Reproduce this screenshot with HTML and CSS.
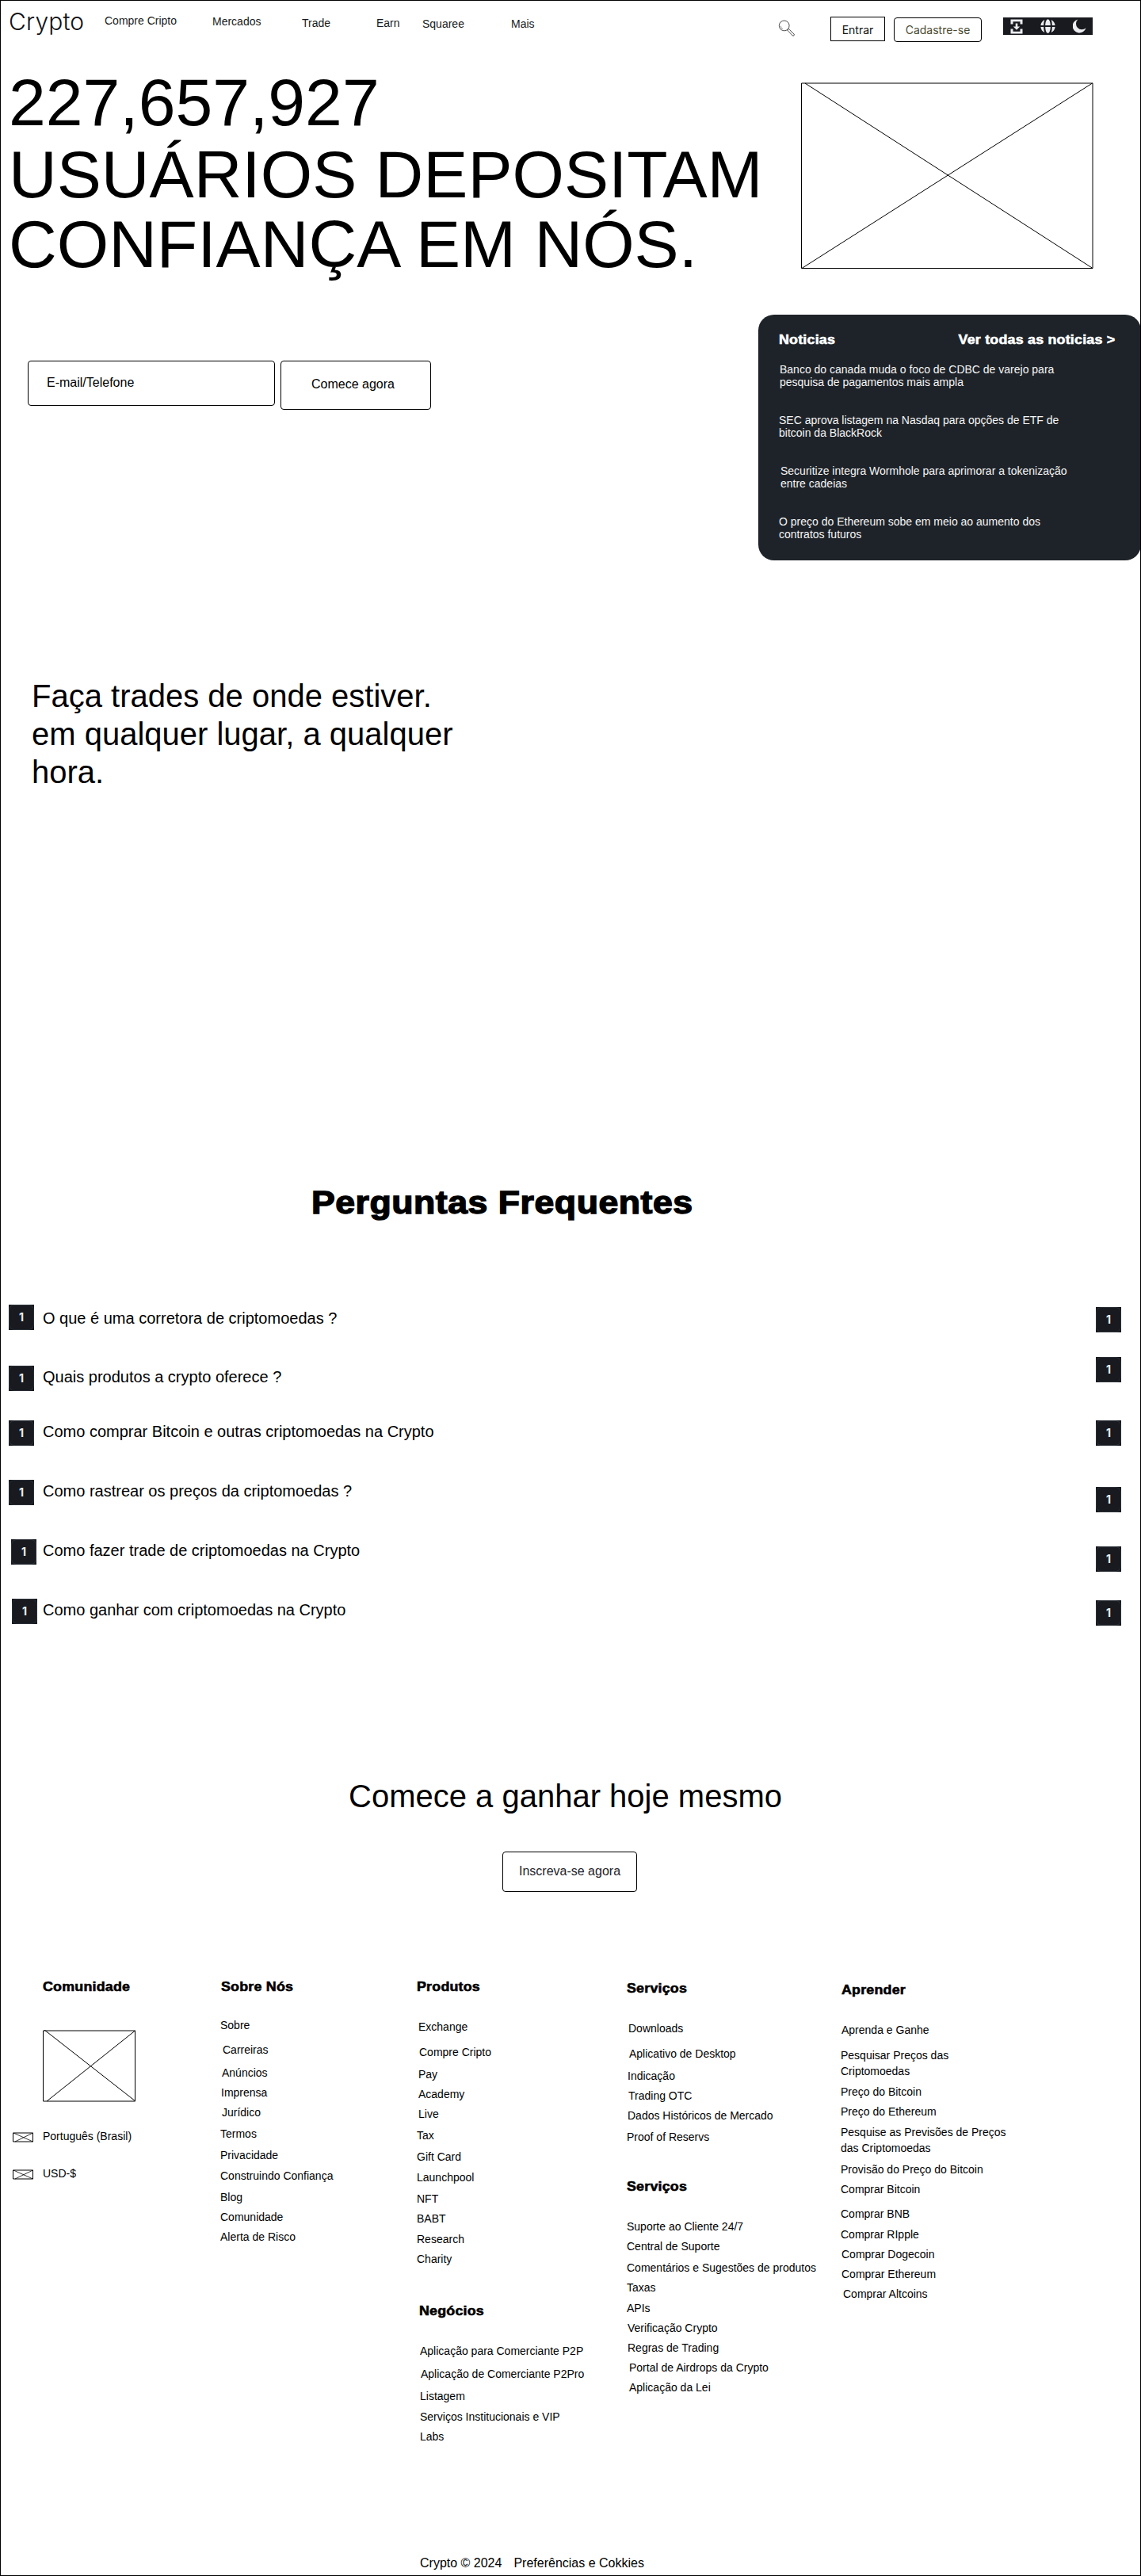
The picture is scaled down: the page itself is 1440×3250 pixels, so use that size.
FILE: index.html
```html
<!DOCTYPE html>
<html lang="pt-BR">
<head>
<meta charset="utf-8">
<title>Crypto</title>
<link rel="stylesheet" href="styles.css">
</head>
<body>
<div class="page">
  <header class="header">
    <div class="logo">Crypto</div>
    <nav class="nav">
      <a class="nav-buy">Compre Cripto</a>
      <a class="nav-markets">Mercados</a>
      <a class="nav-trade">Trade</a>
      <a class="nav-earn">Earn</a>
      <a class="nav-square">Squaree</a>
      <a class="nav-more">Mais</a>
    </nav>
    <svg class="search" width="22" height="22" viewBox="0 0 22 22" fill="none" stroke="#222" stroke-width="0.8">
      <circle cx="7.7" cy="7.4" r="6.4"/>
      <path d="M3.2 7.6a4.6 4.6 0 0 0 3 4.2" stroke-width=".5"/>
      <path d="M11.6 13l1.7-1.6 1.2 1.2 5.6 5.4c1 1.200-.7 2.900-1.900 1.900l-5.300-5.600z"/>
    </svg>
    <a class="btn btn-login">Entrar</a>
    <a class="btn btn-signup">Cadastre-se</a>
    <div class="tools">
      <svg width="16" height="19" viewBox="0 0 16 19" fill="#eaecef">
        <path d="M.5.500h15v6h-3V3.300h-9v3.200h-3zM.500 12.500h3v3.200h9v-3.200h3v6H.500zM6.700 5.500h2.600v4h2.900L8 13.700 3.800 9.500h2.900z"/>
      </svg>
      <svg width="19" height="18" viewBox="0 0 19 18" fill="#eaecef">
        <path d="M5.300.900A9 9 0 0 0 .4 8h3.800C4.200 5.200 4.600 2.800 5.300.9zM5.300 17.100A9 9 0 0 1 .4 10h3.800c0 2.800.4 5.200 1.100 7.100zM13.700.9A9 9 0 0 1 18.600 8h-3.800c0-2.800-.4-5.200-1.100-7.100zM13.700 17.100a9 9 0 0 0 4.900-7.100h-3.800c0 2.800-.4 5.200-1.100 7.100zM6.200 8C6.300 4 7.500.2 9.500.2S12.700 4 12.800 8zM6.200 10c.1 4 1.300 7.800 3.300 7.800s3.200-3.800 3.300-7.800z"/>
      </svg>
      <svg width="17" height="18" viewBox="0 0 17 18" fill="#eaecef">
        <path d="M6.300.5A8.600 8.600 0 1 0 16.500 11.300 7.300 7.300 0 0 1 6.300.5z"/>
      </svg>
    </div>
  </header>

  <section class="hero">
    <div class="hero-main">
      <h1><span>227,657,927</span><br>USUÁRIOS DEPOSITAM<br>CONFIANÇA EM NÓS.</h1>
      <div class="form">
        <div class="field">E-mail/Telefone</div>
        <a class="start">Comece agora</a>
      </div>
    </div>
    <div class="hero-side">
      <svg class="hero-image" width="369" height="236" fill="none" stroke="#000">
        <path d="M.5 1h367.500v233.500H.5zM5 1l363 233.500M367.500 1L1 234.500"/>
      </svg>
      <div class="news">
        <div class="news-head"><strong>Noticias</strong><strong class="news-all">Ver todas as noticias &gt;</strong></div>
        <p class="in-1">Banco do canada muda o foco de CDBC de varejo para<br>pesquisa de pagamentos mais ampla</p>
        <p>SEC aprova listagem na Nasdaq para opções de ETF de<br>bitcoin da BlackRock</p>
        <p class="in-2">Securitize integra Wormhole para aprimorar a tokenização<br>entre cadeias</p>
        <p>O preço do Ethereum sobe em meio ao aumento dos<br>contratos futuros</p>
      </div>
    </div>
  </section>

  <h2 class="trades">Faça trades de onde estiver.<br>em qualquer lugar, a qualquer<br>hora.</h2>

  <section class="faq">
    <h2 class="faq-title">Perguntas Frequentes</h2>
    <div class="faq-row"><b class="badge">1</b><span>O que é uma corretora de criptomoedas ?</span><b class="badge">1</b></div>
    <div class="faq-row"><b class="badge">1</b><span>Quais produtos a crypto oferece ?</span><b class="badge">1</b></div>
    <div class="faq-row"><b class="badge">1</b><span>Como comprar Bitcoin e outras criptomoedas na Crypto</span><b class="badge">1</b></div>
    <div class="faq-row"><b class="badge">1</b><span>Como rastrear os preços da criptomoedas ?</span><b class="badge">1</b></div>
    <div class="faq-row"><b class="badge">1</b><span>Como fazer trade de criptomoedas na Crypto</span><b class="badge">1</b></div>
    <div class="faq-row"><b class="badge">1</b><span>Como ganhar com criptomoedas na Crypto</span><b class="badge">1</b></div>
  </section>

  <section class="cta">
    <h2>Comece a ganhar hoje mesmo</h2>
    <a class="cta-btn">Inscreva-se agora</a>
  </section>

  <footer class="footer">
    <div class="col col-community">
      <h3>Comunidade</h3>
      <svg class="community-image" width="118" height="91" fill="none" stroke="#000">
        <path d="M.5 1h116v89H.5zM2 0l115 90M116.500 1L5 90"/>
      </svg>
      <div class="pref"><svg width="26" height="13" fill="none" stroke="#000"><path d="M.5 1h25v11H.5z"/><path d="M1 1l24.500 11M25.500 1L3 12" stroke-width=".8"/></svg><span>Português (Brasil)</span></div>
      <div class="pref"><svg width="26" height="13" fill="none" stroke="#000"><path d="M.5 1h25v11H.5z"/><path d="M1 1l24.500 11M25.500 1L3 12" stroke-width=".8"/></svg><span>USD-$</span></div>
    </div>
    <div class="col col-about">
      <h3>Sobre Nós</h3>
      <ul>
        <li class="mt-32">Sobre</li>
        <li class="mt-15 in-3">Carreiras</li>
        <li class="mt-13 in-2">Anúncios</li>
        <li class="in-1">Imprensa</li>
        <li class="in-2">Jurídico</li>
        <li class="mt-11">Termos</li>
        <li class="mt-11">Privacidade</li>
        <li class="mt-10">Construindo Confiança</li>
        <li class="mt-11">Blog</li>
        <li>Comunidade</li>
        <li>Alerta de Risco</li>
      </ul>
    </div>
    <div class="col col-products">
      <h3>Produtos</h3>
      <ul>
        <li class="mt-34 in-2">Exchange</li>
        <li class="mt-16 in-3">Compre Cripto</li>
        <li class="mt-12 in-2">Pay</li>
        <li class="in-2">Academy</li>
        <li class="in-2">Live</li>
        <li class="mt-11">Tax</li>
        <li class="mt-11">Gift Card</li>
        <li class="mt-10">Launchpool</li>
        <li class="mt-11">NFT</li>
        <li>BABT</li>
        <li class="mt-10">Research</li>
        <li>Charity</li>
      </ul>
      <h3 class="sub-business">Negócios</h3>
      <ul class="business">
        <li class="mt-34">Aplicação para Comerciante P2P</li>
        <li class="mt-13 in-1">Aplicação de Comerciante P2Pro</li>
        <li class="mt-12">Listagem</li>
        <li class="mt-10">Serviços Institucionais e VIP</li>
        <li>Labs</li>
      </ul>
    </div>
    <div class="col col-services">
      <h3>Serviços</h3>
      <ul>
        <li class="mt-34 in-2">Downloads</li>
        <li class="mt-16 in-3">Aplicativo de Desktop</li>
        <li class="mt-12 in-1">Indicação</li>
        <li class="in-2">Trading OTC</li>
        <li class="in-1">Dados Históricos de Mercado</li>
        <li class="mt-11">Proof of Reservs</li>
      </ul>
      <h3 class="sub-services">Serviços</h3>
      <ul>
        <li class="mt-34">Suporte ao Cliente 24/7</li>
        <li>Central de Suporte</li>
        <li class="mt-11">Comentários e Sugestões de produtos</li>
        <li>Taxas</li>
        <li class="mt-10">APIs</li>
        <li class="in-1">Verificação Crypto</li>
        <li class="in-1">Regras de Trading</li>
        <li class="in-3">Portal de Airdrops da Crypto</li>
        <li class="in-3">Aplicação da Lei</li>
      </ul>
    </div>
    <div class="col col-learn">
      <h3>Aprender</h3>
      <ul>
        <li class="mt-34 in-1">Aprenda e Ganhe</li>
        <li class="mt-14 tall">Pesquisar Preços das<br>Criptomoedas</li>
        <li class="mt-8">Preço do Bitcoin</li>
        <li>Preço do Ethereum</li>
        <li class="mt-8 tall">Pesquise as Previsões de Preços<br>das Criptomoedas</li>
        <li>Provisão do Preço do Bitcoin</li>
        <li>Comprar Bitcoin</li>
        <li class="mt-15">Comprar BNB</li>
        <li class="mt-10">Comprar RIpple</li>
        <li class="in-1">Comprar Dogecoin</li>
        <li class="in-1">Comprar Ethereum</li>
        <li class="in-3">Comprar Altcoins</li>
      </ul>
    </div>
  </footer>

  <div class="legal"><span>Crypto © 2024</span><span>Preferências e Cokkies</span></div>
</div>
</body>
</html>
```
FILE: styles.css
```css
* { box-sizing: border-box; }
body { margin: 0; background: #fff; color: #000; font: 14px/16px "Liberation Sans", Arial, sans-serif; }
h1, h2, h3, p, ul { margin: 0; padding: 0; font-weight: 400; }
ul { list-style: none; }
svg { display: block; flex: none; }

.page { position: relative; width: 1440px; height: 3250px; overflow: hidden; }
.page::after { content: ""; position: absolute; inset: 0; border: 1px solid #000; pointer-events: none; }

/* Header */
.header { display: flex; align-items: flex-start; height: 60px; padding-left: 11px; }
.logo { width: 121px; padding-top: 9px; font: 300 30px/36px Inter, sans-serif; letter-spacing: .15px; color: #111217; }
.nav { display: flex; width: 850px; color: #181a20; }
.nav-buy { width: 136px; padding-top: 18px; }
.nav-markets { width: 113px; padding-top: 19px; }
.nav-trade { width: 94px; padding-top: 21px; }
.nav-earn { width: 58px; padding-top: 21px; }
.nav-square { width: 112px; padding-top: 22px; }
.nav-more { padding-top: 22px; }
.search { margin: 25px 44px 0 0; }
.btn { font: 14px/28px Inter, sans-serif; border: 1px solid #000; text-align: center; flex: none; }
.btn-login { width: 69px; height: 31px; margin: 21px 11px 0 0; line-height: 31px; color: #111; }
.btn-signup { width: 111px; height: 31px; margin-top: 22px; line-height: 30px; border-radius: 4px; color: #4a4a30; }
.tools { display: flex; justify-content: space-between; align-items: center; width: 113px; height: 22px; margin: 22px 0 0 27px; padding: 0 8px 0 9px; background: #181a20; }

/* Hero */
.hero { display: flex; height: 794px; }
.hero-main { width: 957px; padding: 25px 0 0 11px; }
h1 { font-size: 84.1px; line-height: 88px; white-space: nowrap; }
h1 span { display: inline-block; margin-bottom: 3px; }
.form { display: flex; align-items: flex-start; gap: 7px; margin: 103px 0 0 24px; font-size: 16px; }
.field { width: 312px; height: 57px; padding: 18px 23px; border: 1px solid #000; border-radius: 4px; line-height: 18px; }
.start { width: 190px; height: 62px; padding-top: 20px; border: 1px solid #000; border-radius: 4px; text-align: center; line-height: 18px; padding-right: 7px; }
.hero-side { width: 483px; padding-top: 44px; }
.hero-image { margin-left: 54px; }
.news { height: 310px; margin-top: 57px; padding: 23px 33px 0 26px; border-radius: 20px; background: #1e2329; color: #fff; }
.news-head { display: flex; justify-content: space-between; margin-bottom: 20px; }
.news p { margin-bottom: 32px; color: #f5f5f5; }

/* Heavy, extended headings */
strong, h3, .faq-title { font-weight: 700; font-size: 16px; line-height: 18px; letter-spacing: .012em; -webkit-text-stroke: .035em currentColor; transform: scaleX(1.115); transform-origin: 0 0; }
.news-all { transform-origin: 100% 0; }

.trades { height: 639px; padding-left: 40px; font-size: 40px; line-height: 48px; }

/* FAQ */
.faq { height: 749px; }
.faq-title { height: 152px; margin-left: 393px; width: 500px; font-size: 40px; line-height: 48px; }
.faq-row { --l: 0px; --t: 0px; --r: 0px; --x: 11px; display: flex; align-items: flex-start; height: 75px; padding-left: var(--x); }
.faq-row span { width: 1330px; margin: var(--t) 0 0 calc(21px - var(--x)); padding-left: 1px; font-size: 20px; line-height: 24px; }
.badge { flex: none; width: 32px; height: 32px; margin-top: var(--l); background: #181a20; color: #eaecef; text-align: center; font: 700 14px/31px Inter, sans-serif; position: relative; }
.badge::before { content: ""; position: absolute; inset: 0; border: 1px solid #2b3139; border-radius: 7px; }
.badge:last-child { margin-top: var(--r); }
.faq-row:nth-child(2) { height: 67px; --l: 1px; --t: 6px; --r: 4px; }
.faq-row:nth-child(3) { height: 79px; --l: 11px; --t: 13px; --r: 0px; }
.faq-row:nth-child(4) { height: 76px; --l: 1px; --t: 3px; --r: 1px; }
.faq-row:nth-child(5) { --l: 0px; --t: 2px; --r: 9px; }
.faq-row:nth-child(6) { height: 74px; --l: 0px; --t: 2px; --r: 9px; --x: 14px; }
.faq-row:nth-child(7) { --l: 1px; --t: 3px; --r: 3px; --x: 15px; }

/* Call to action */
.cta { height: 255px; }
.cta h2 { padding-left: 440px; font-size: 40px; line-height: 48px; }
.cta-btn { display: block; width: 170px; height: 51px; margin: 46px 0 0 634px; padding-top: 15px; border: 1px solid #000; border-radius: 4px; text-align: center; font-size: 16px; line-height: 18px; color: #1e2329; }

/* Footer */
.footer { display: flex; height: 728px; }
.col { flex: none; }
h3 { position: relative; top: 1px; }
.col-community { width: 278px; padding-left: 16px; }
.col-community h3 { margin-left: 38px; }
.community-image { margin: 46px 0 35px 38px; }
.pref { display: flex; align-items: center; gap: 12px; height: 16px; margin-bottom: 31px; }
.pref svg { margin-top: 3px; }
.col-about { width: 248px; }
.col-about h3 { margin-left: 1px; }
.col-products { width: 265px; }
.col-services { width: 270px; padding-top: 2px; }
.col-learn { padding-top: 4px; }
.col-learn h3 { margin-left: 1px; }
li { margin-top: 9px; }
.tall { line-height: 20px; }
.sub-business { margin-top: 48px; margin-left: 3px; }
.business { padding-left: 4px; }
.sub-services { margin-top: 45px; }
.mt-8 { margin-top: 8px; }
.mt-10 { margin-top: 10px; }
.mt-11 { margin-top: 11px; }
.mt-12 { margin-top: 12px; }
.mt-13 { margin-top: 13px; }
.mt-14 { margin-top: 14px; }
.mt-15 { margin-top: 15px; }
.mt-16 { margin-top: 16px; }
.mt-32 { margin-top: 32px; }
.mt-34 { margin-top: 34px; }
.in-1 { padding-left: 1px; }
.in-2 { padding-left: 2px; }
.in-3 { padding-left: 3px; }

.legal { display: flex; gap: 15px; padding-left: 530px; font-size: 16px; line-height: 18px; }
```
